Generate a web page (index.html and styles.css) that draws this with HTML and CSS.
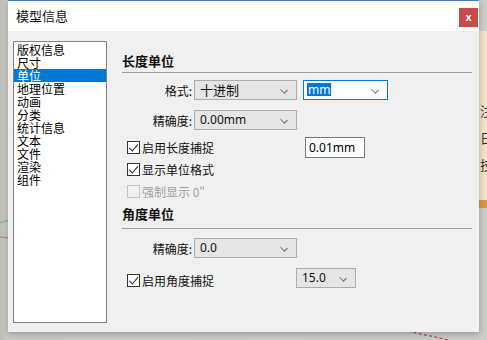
FILE: index.html
```html
<!DOCTYPE html>
<html lang="zh-CN">
<head>
  <meta charset="UTF-8" />
  <title>模型信息</title>
  <link rel="stylesheet" href="styles.css">
</head>
<body>
  <div class="desktop">
    <div class="dialog">
      <div class="titlebar">
        <span class="title">模型信息</span>
        <button class="close">x</button>
      </div>

      <div class="dialog-body">
        <ul class="nav-list">
          <li>版权信息</li>
          <li>尺寸</li>
          <li class="active">单位</li>
          <li>地理位置</li>
          <li>动画</li>
          <li>分类</li>
          <li>统计信息</li>
          <li>文本</li>
          <li>文件</li>
          <li>渲染</li>
          <li>组件</li>
        </ul>

        <div class="panel">
          <h3 class="section-title">长度单位</h3>

          <div class="row row-format">
            <label class="row-label">格式:</label>
            <div class="select select-wide">十进制<span class="chev"></span></div>
            <div class="select select-unit"><span class="sel-text">mm</span><span class="chev"></span></div>
          </div>

          <div class="row row-precision">
            <label class="row-label">精确度:</label>
            <div class="select select-wide latin">0.00mm<span class="chev"></span></div>
          </div>

          <div class="check-row snap-row">
            <span class="check-label"><span class="checkbox checked"></span>启用长度捕捉</span>
            <div class="text-input">0.01mm</div>
          </div>

          <div class="check-row">
            <span class="check-label"><span class="checkbox checked"></span>显示单位格式</span>
          </div>

          <div class="check-row disabled">
            <span class="check-label"><span class="checkbox"></span>强制显示 0"</span>
          </div>

          <h3 class="section-title second">角度单位</h3>

          <div class="row row-angle">
            <label class="row-label">精确度:</label>
            <div class="select select-wide latin">0.0<span class="chev"></span></div>
          </div>

          <div class="check-row angle-snap">
            <span class="check-label"><span class="checkbox checked"></span>启用角度捕捉</span>
            <div class="select select-small latin">15.0<span class="chev"></span></div>
          </div>
        </div>
      </div>
    </div>

    <div class="side-panel">
      <span>注</span>
      <span>日</span>
      <span>技</span>
    </div>
    <div class="guide green"></div>
    <div class="guide red"></div>
    <div class="guide dashed"></div>
  </div>
</body>
</html>
```

FILE: styles.css
```css
* {
  box-sizing: border-box;
  margin: 0;
  padding: 0;
}

body {
  font-family: "Noto Sans CJK SC", "Noto Sans", sans-serif;
  font-size: 12px;
  color: #000;
  background: #c6c6c2;
  width: 487px;
  height: 340px;
  overflow: hidden;
}

.desktop {
  position: relative;
  width: 487px;
  height: 340px;
  background: linear-gradient(to right, #bdbdb8 0, #cacac6 8px, #cbcbc7 100%);
}

.dialog {
  position: relative;
  z-index: 2;
  margin-left: 8px;
  width: 471px;
  height: 332px;
  background: #f0f0f0;
  box-shadow: 0 2px 6px rgba(0, 0, 0, 0.25);
  display: flex;
  flex-direction: column;
}

.titlebar {
  height: 31px;
  background: #fffffd;
  border-top: 1px solid #3d7fc6;
  display: flex;
  align-items: center;
  justify-content: space-between;
  padding: 0 1px 1px 8px;
}

.title {
  font-size: 13px;
  color: #111;
}

.close {
  width: 19px;
  height: 19px;
  border: none;
  background: #c94a4a;
  color: #fff;
  font-family: "Liberation Sans", sans-serif;
  font-weight: bold;
  font-size: 11px;
  line-height: 17px;
  margin-top: 4px;
}

.dialog-body {
  flex: 1;
  display: flex;
  padding: 10px 7px 0 5px;
  gap: 15px;
}

.nav-list {
  list-style: none;
  width: 94px;
  height: 282px;
  background: #fff;
  border: 1px solid #828282;
  padding-top: 1px;
}

.nav-list li {
  height: 13px;
  line-height: 13px;
  padding-left: 3px;
  font-size: 12px;
  white-space: nowrap;
}

.nav-list li.active {
  background: #0078d7;
  color: #fff;
}

.panel {
  flex: 1;
  padding-top: 11px;
}

.section-title {
  font-size: 13px;
  font-weight: bold;
  line-height: 17px;
  padding-bottom: 3px;
  border-bottom: 1px solid #a0a0a0;
  color: #111;
}

.section-title.second {
  margin-top: 3px;
  padding-bottom: 6px;
}

.row {
  display: flex;
  align-items: center;
  height: 20px;
}

.row-format {
  margin-top: 7px;
}

.row-precision {
  margin-top: 10px;
}

.row-angle {
  margin-top: 9px;
}

.row-label {
  width: 72px;
  text-align: right;
  padding-right: 2px;
  font-size: 12px;
  color: #111;
}

.select {
  position: relative;
  height: 20px;
  line-height: 18px;
  background: #e5e5e5;
  border: 1px solid #adadad;
  padding-left: 5px;
  font-size: 13px;
  color: #111;
}

.select.latin {
  font-family: "Noto Sans", sans-serif;
  font-size: 12px;
}

.select-wide {
  width: 103px;
}

.select-unit {
  width: 85px;
  margin-left: 6px;
  background: #fff;
  border-color: #0078d7;
  padding-left: 3px;
  font-family: "Noto Sans", sans-serif;
  font-size: 12px;
}

.sel-text {
  background: #0078d7;
  color: #fff;
  padding: 0 1px;
  line-height: 13px;
  display: inline-block;
}

.select-small {
  width: 60px;
}

.chev {
  position: absolute;
  right: 9px;
  top: 6px;
  width: 6px;
  height: 6px;
  border-right: 1px solid #666;
  border-bottom: 1px solid #666;
  transform: rotate(45deg) scaleY(0.8);
}

.check-row {
  display: flex;
  align-items: center;
  height: 22px;
}

.snap-row {
  margin-top: 7px;
  height: 21px;
}

.angle-snap {
  margin-top: 10px;
  height: 20px;
}

.check-label {
  display: flex;
  align-items: center;
  padding-left: 5px;
  font-size: 12px;
  color: #111;
  white-space: nowrap;
}

.snap-row .check-label {
  width: 183px;
}

.angle-snap .check-label {
  width: 174px;
  margin-top: 4px;
}

.checkbox {
  position: relative;
  width: 13px;
  height: 13px;
  border: 1px solid #333;
  background: #fff;
  margin-right: 2px;
}

.checkbox.checked::after {
  content: "";
  position: absolute;
  left: 3px;
  top: 0px;
  width: 4px;
  height: 8px;
  border-right: 1px solid #222;
  border-bottom: 1px solid #222;
  transform: rotate(40deg);
}

.check-row.disabled .check-label {
  color: #a0a0a0;
}

.check-row.disabled .checkbox {
  border-color: #c4c4c4;
  background: #f0f0f0;
}

.text-input {
  width: 60px;
  height: 21px;
  line-height: 19px;
  background: #fff;
  border: 1px solid #7a7a7a;
  padding-left: 3px;
  font-family: "Noto Sans", sans-serif;
  font-size: 12px;
}

/* fondo: cosas de la escena detras del dialogo */
.side-panel {
  position: absolute;
  left: 479px;
  top: 31px;
  width: 8px;
  height: 177px;
  background: #f3e2c8;
  border-bottom: 8px solid #d99547;
  display: flex;
  flex-direction: column;
  padding-top: 72px;
  gap: 12px;
  overflow: hidden;
  font-size: 13px;
  line-height: 15px;
  color: #333;
  padding-left: 1px;
}

.guide {
  position: absolute;
  z-index: 1;
  height: 1px;
}

.guide.green {
  left: 0;
  top: 221px;
  width: 9px;
  background: #7ab57a;
  transform: rotate(-12deg);
}

.guide.red {
  left: 0;
  top: 237px;
  width: 9px;
  background: #b06a6a;
  transform: rotate(8deg);
}

.guide.dashed {
  left: 408px;
  top: 335px;
  width: 40px;
  border-top: 1px dashed #a03030;
  transform: rotate(12deg);
}
```
